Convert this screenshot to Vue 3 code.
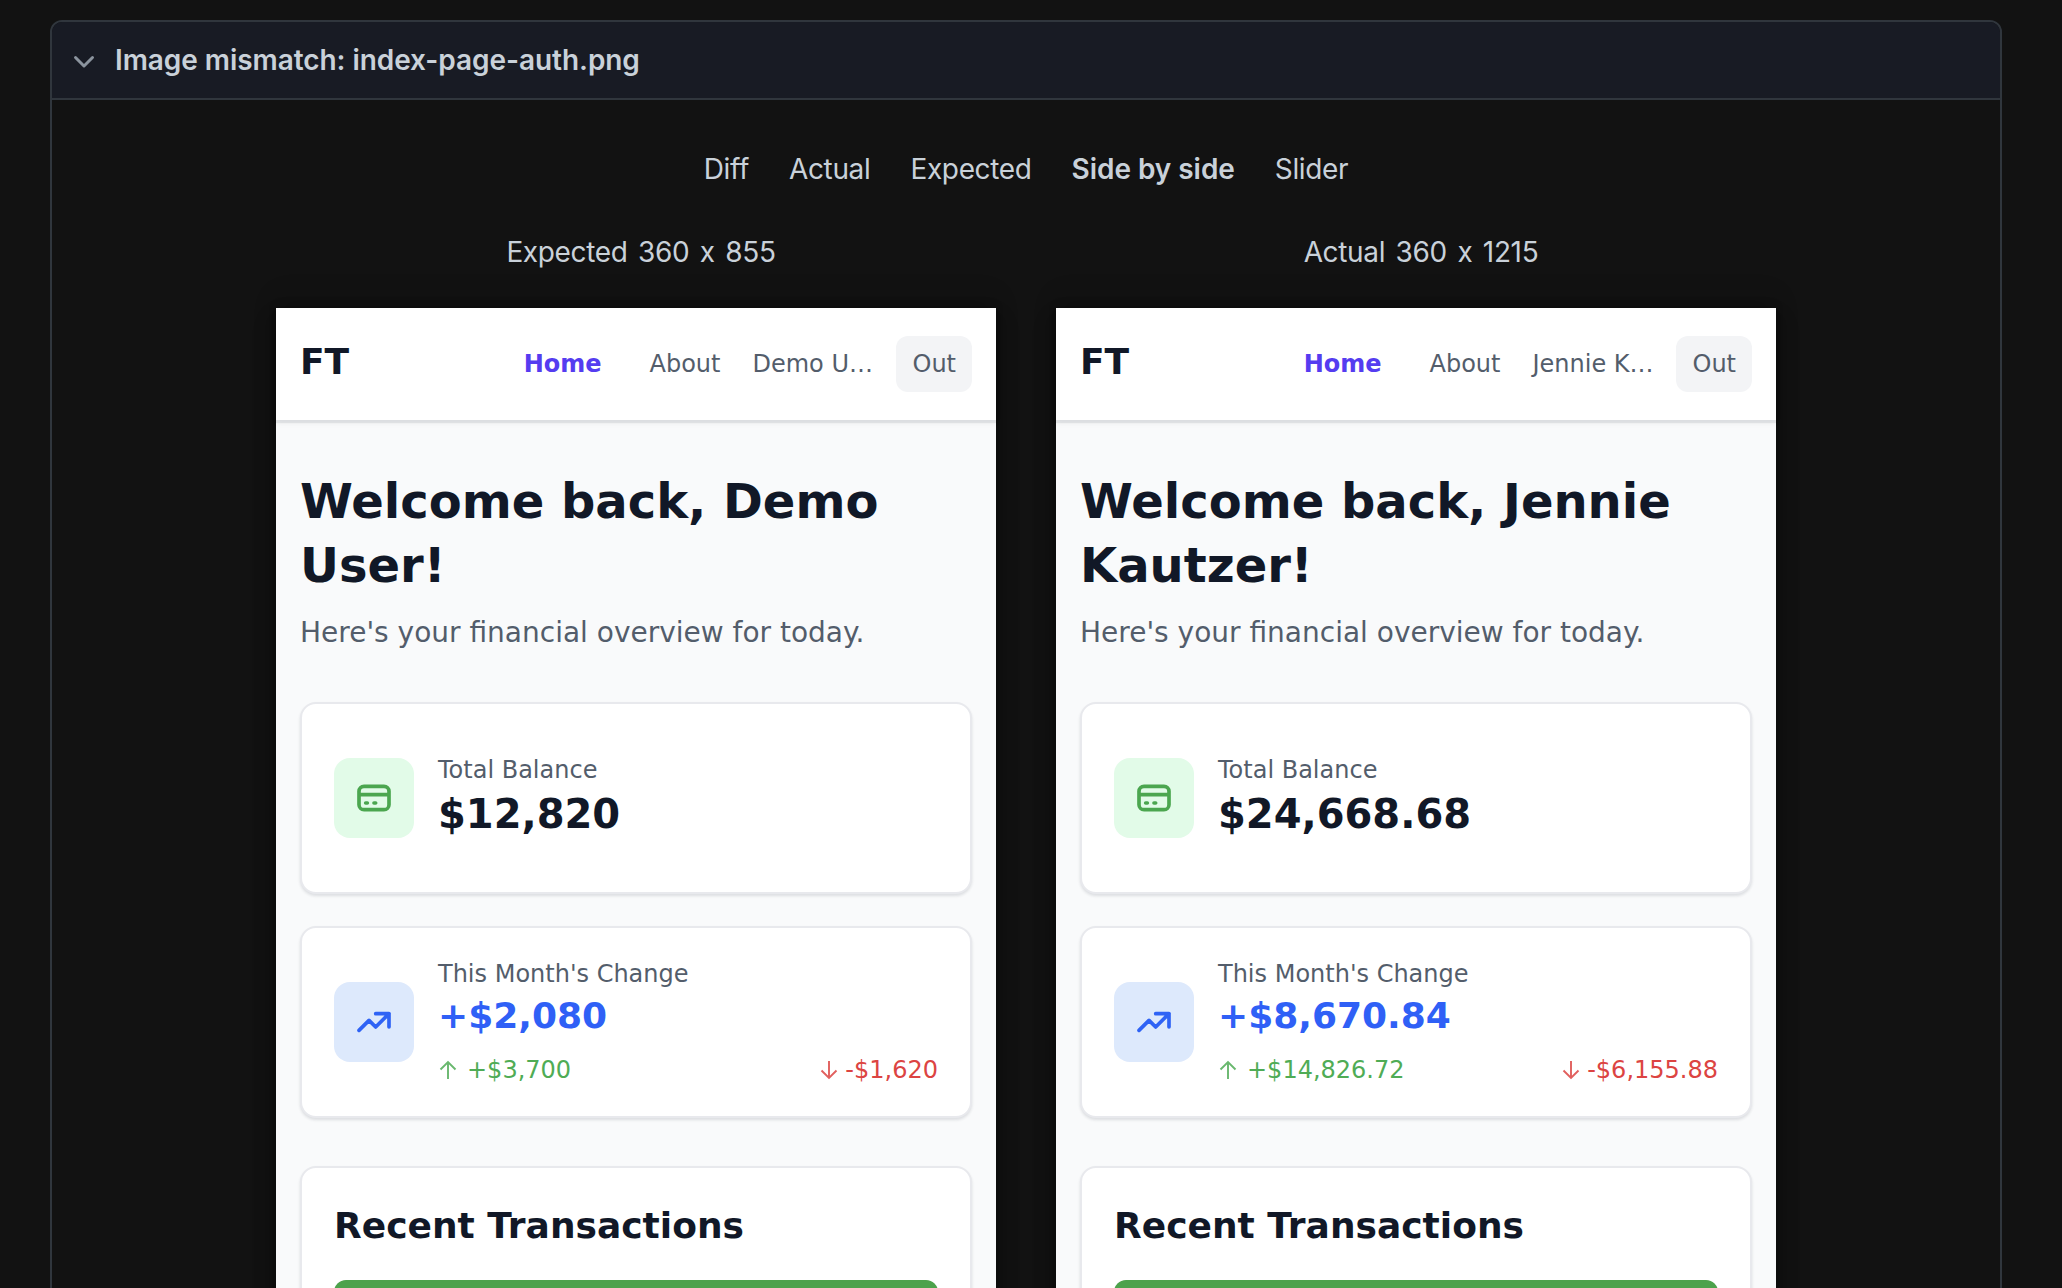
<script setup>
const tabs = ['Diff', 'Actual', 'Expected', 'Side by side', 'Slider']
const shots = [
  {
    label: 'Expected', size: '360 x 855', user: 'Demo U…', first: 'Demo', last: 'User',
    balance: '$12,820', change: '+$2,080', income: '+$3,700', spent: '-$1,620',
  },
  {
    label: 'Actual', size: '360 x 1215', user: 'Jennie K…', first: 'Jennie', last: 'Kautzer',
    balance: '$24,668.68', change: '+$8,670.84', income: '+$14,826.72', spent: '-$6,155.88',
  },
]
</script>

<template>
  <main class="page">
    <section class="panel">
      <header class="panel-head">
        <svg class="chevron" width="32" height="32" viewBox="0 0 16 16" fill="#8b949e">
          <path fill-rule="evenodd" d="M12.78 6.22a.75.75 0 010 1.06l-4.25 4.25a.75.75 0 01-1.06 0L3.22 7.28a.75.75 0 011.06-1.06L8 9.94l3.72-3.72a.75.75 0 011.06 0z" />
        </svg>
        <span class="panel-title">Image mismatch: index-page-auth.png</span>
      </header>

      <nav class="tabs">
        <span v-for="t in tabs" :key="t" :class="['tab', { active: t === 'Side by side' }]">{{ t }}</span>
      </nav>

      <div class="shots">
        <div v-for="s in shots" :key="s.label" class="shot">
          <div class="caption"><span>{{ s.label }} {{ s.size }}</span></div>
          <article class="phone">
            <header class="bar">
              <span class="brand">FT</span>
              <nav class="links">
                <span class="link home">Home</span>
                <span class="link">About</span>
                <span class="user">{{ s.user }}</span>
                <span class="out">Out</span>
              </nav>
            </header>
            <div class="content">
              <h1>Welcome back, {{ s.first }}<br>{{ s.last }}!</h1>
              <p class="sub">Here's your financial overview for today.</p>

              <section class="card">
                <div class="icon green">
                  <svg width="40" height="40" viewBox="0 0 24 24" fill="none" stroke="currentColor" stroke-width="2.2" stroke-linecap="round" stroke-linejoin="round">
                    <path d="M3 10h18M7 15h1m4 0h1m-7 4h12a3 3 0 003-3V8a3 3 0 00-3-3H6a3 3 0 00-3 3v8a3 3 0 003 3z" />
                  </svg>
                </div>
                <div class="info">
                  <div class="label">Total Balance</div>
                  <div class="balance">{{ s.balance }}</div>
                </div>
              </section>

              <section class="card">
                <div class="icon blue">
                  <svg width="40" height="40" viewBox="0 0 24 24" fill="none" stroke="currentColor" stroke-width="2.2" stroke-linecap="round" stroke-linejoin="round">
                    <path d="M13 7h8m0 0v8m0-8l-8 8-4-4-6 6" />
                  </svg>
                </div>
                <div class="info">
                  <div class="label">This Month's Change</div>
                  <div class="change">{{ s.change }}</div>
                  <div class="flows">
                    <span class="flow up">
                      <svg width="20" height="20" viewBox="0 0 20 20" fill="none" stroke="currentColor" stroke-width="1.9">
                        <path d="M10 19V2M2.5 9.5L10 2l7.5 7.5" />
                      </svg>
                      {{ s.income }}
                    </span>
                    <span class="flow down">
                      <svg width="20" height="20" viewBox="0 0 20 20" fill="none" stroke="currentColor" stroke-width="1.9">
                        <path d="M10 1v17M2.5 10.5L10 18l7.5-7.5" />
                      </svg>
                      {{ s.spent }}
                    </span>
                  </div>
                </div>
              </section>

              <section class="card recent">
                <h2>Recent Transactions</h2>
                <div class="button"></div>
              </section>
            </div>
          </article>
        </div>
      </div>
    </section>
  </main>
</template>

<style>
body { background: #121212; }
</style>

<style scoped>
* { box-sizing: border-box; }
.page {
  height: 1288px;
  overflow: hidden;
  padding: 20px 60px 0 50px;
  background: #121212;
  color: #c9d1d9;
  font: 28px/42px Inter, "Liberation Sans", sans-serif;
  font-feature-settings: "calt" 0;
}
.panel {
  height: 1400px;
  border: 2px solid #30363d;
  border-radius: 12px;
}
.panel-head {
  display: flex;
  align-items: center;
  gap: 15px;
  height: 78px;
  padding: 0 16px;
  border-bottom: 2px solid #30363d;
  border-radius: 10px 10px 0 0;
  background: #181b24;
}
.panel-title { font-weight: 600; letter-spacing: -0.06px; white-space: nowrap; }
.tabs {
  display: flex;
  justify-content: center;
  gap: 40px;
  margin-top: 48px;
}
.tab { white-space: nowrap; letter-spacing: -0.35px; }
.active { font-weight: 600; letter-spacing: -0.05px; }
.shots {
  display: flex;
  justify-content: center;
  gap: 60px;
  margin-top: 41px;
}
.shot { width: 720px; }
.caption {
  height: 77px;
  padding-left: 10px;
  text-align: center;
  letter-spacing: -0.35px;
  word-spacing: 3px;
}
.phone {
  height: 1200px;
  background: #f9fafb;
  color: #111827;
  font-family: "DejaVu Sans", sans-serif;
  font-feature-settings: normal;
  box-shadow: 0 4px 4px rgb(0 0 0 / 10%), 0 12px 12px rgb(0 0 0 / 10%), 0 -4px 8px rgb(0 0 0 / 10%),
    0 -12px 24px rgb(0 0 0 / 10%), 0 12px 24px rgb(0 0 0 / 15%);
}
.bar {
  display: flex;
  align-items: center;
  justify-content: space-between;
  height: 112px;
  padding: 0 24px;
  background: #fff;
  box-shadow: 0 3px 1px rgb(17 24 39 / 8%), 0 3px 6px rgb(17 24 39 / 6%);
}
.brand { font-size: 36px; font-weight: 700; line-height: 56px; padding-bottom: 4px; }
.links { display: flex; align-items: center; gap: 16px; font-size: 24px; line-height: 32px; color: #535d6b; }
.link { padding: 0 16px; }
.home { font-weight: 700; color: #553cf0; }
.user { width: 128px; white-space: nowrap; }
.out { padding: 12px 16px; border-radius: 12px; background: #f3f4f6; }
.content { padding: 49px 24px 0; }
h1 { margin: 0; font-size: 48px; line-height: 64px; font-weight: 700; white-space: nowrap; }
.sub { margin: 16px 0 0; font-size: 28px; line-height: 40px; color: #535d6b; white-space: nowrap; }
.card {
  display: flex;
  align-items: center;
  gap: 24px;
  height: 192px;
  padding: 0 32px;
  margin-top: 32px;
  border: 2px solid #e8e9ed;
  border-radius: 16px;
  background: #fff;
  box-shadow: 0 2px 3px rgb(17 24 39 / 12%);
}
.sub + .card { margin-top: 49px; }
.icon {
  display: flex;
  align-items: center;
  justify-content: center;
  width: 80px;
  height: 80px;
  border-radius: 16px;
}
.green { background: #e2fbe8; color: #4ba64f; }
.blue { background: #dde9fc; color: #2f63f5; }
.info { flex: 1; }
.label { font-size: 24px; line-height: 32px; color: #535d6b; }
.balance { font-size: 40px; line-height: 56px; font-weight: 700; }
.change { font-size: 36px; line-height: 52px; font-weight: 700; color: #2f60f6; }
.flows { display: flex; justify-content: space-between; margin-top: 12px; font-size: 24px; line-height: 32px; }
.flow { display: flex; align-items: center; }
.up { gap: 9px; color: #4fac55; }
.down { gap: 6px; color: #dc4442; }
.flow svg { opacity: 0.85; }
.recent { display: block; height: 600px; margin-top: 48px; padding-top: 30px; }
h2 { margin: 0; font-size: 36px; line-height: 56px; font-weight: 700; }
.button { height: 90px; margin-top: 26px; border-radius: 12px; background: #4ca24c; }
</style>
